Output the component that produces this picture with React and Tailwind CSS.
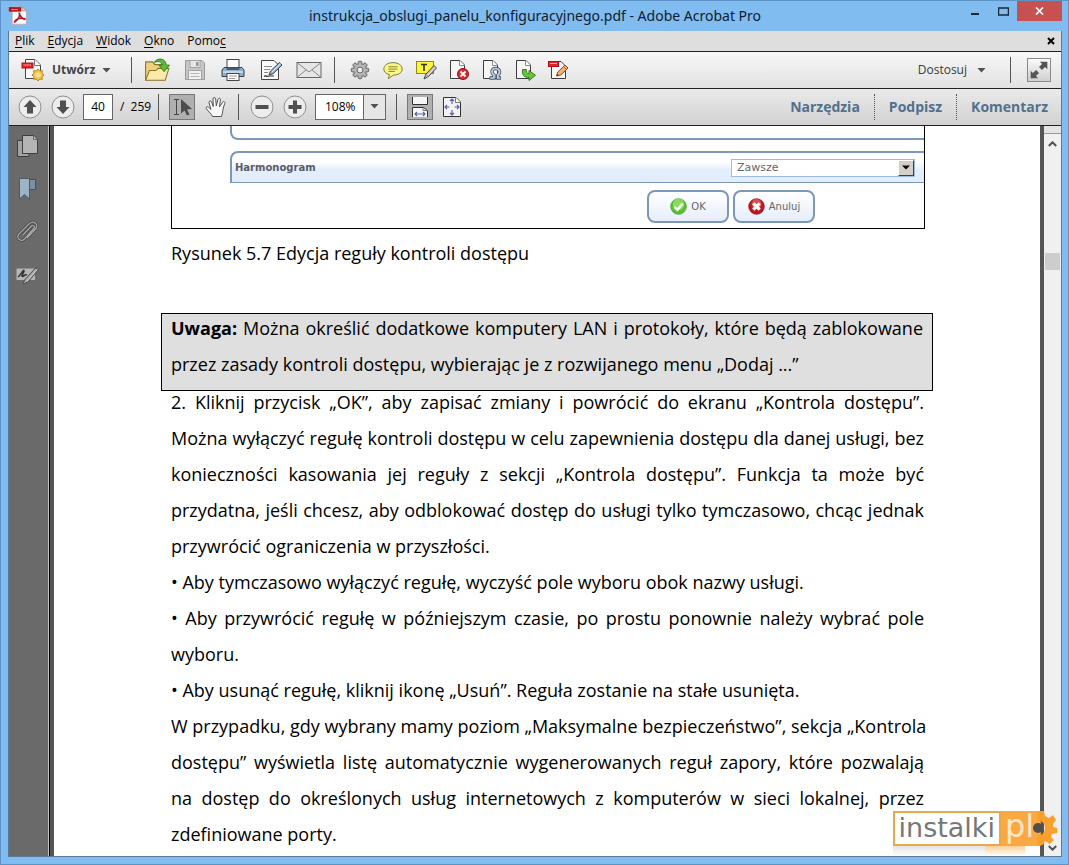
import clsx from 'clsx';

const menus = [
    { before: '', key: 'P', after: 'lik' },
    { before: '', key: 'E', after: 'dycja' },
    { before: '', key: 'W', after: 'idok' },
    { before: '', key: 'O', after: 'kno' },
    { before: 'Pomo', key: 'c', after: '' },
];

// every paragraph is a list of lines, the last one stays ragged
const paragraphs = [
    [
        '2. Kliknij przycisk „OK”, aby zapisać zmiany i powrócić do ekranu „Kontrola dostępu”.',
        'Można wyłączyć regułę kontroli dostępu w celu zapewnienia dostępu dla danej usługi, bez',
        'konieczności kasowania jej reguły z sekcji „Kontrola dostępu”. Funkcja ta może być',
        'przydatna, jeśli chcesz, aby odblokować dostęp do usługi tylko tymczasowo, chcąc jednak',
        'przywrócić ograniczenia w przyszłości.',
    ],
    ['• Aby tymczasowo wyłączyć regułę, wyczyść pole wyboru obok nazwy usługi.'],
    ['• Aby przywrócić regułę w późniejszym czasie, po prostu ponownie należy wybrać pole', 'wyboru.'],
    ['• Aby usunąć regułę, kliknij ikonę „Usuń”. Reguła zostanie na stałe usunięta.'],
    [
        'W przypadku, gdy wybrany mamy poziom „Maksymalne bezpieczeństwo”, sekcja „Kontrola',
        'dostępu” wyświetla listę automatycznie wygenerowanych reguł zapory, które pozwalają',
        'na dostęp do określonych usług internetowych z komputerów w sieci lokalnej, przez',
        'zdefiniowane porty.',
    ],
];

function Icon({ size = 24, className, children }) {
    return (
        <svg width={size} height={size} viewBox="0 0 24 24" fill="none" className={clsx('shrink-0', className)} aria-hidden="true">
            {children}
        </svg>
    );
}

function Caret() {
    return (
        <svg width="9" height="5" viewBox="0 0 9 5" className="shrink-0 pointer-events-none" aria-hidden="true">
            <path d="M0.5 0H8.5L4.5 4.6Z" fill="#505050" />
        </svg>
    );
}

function Separator() {
    return <div className="w-px h-[26px] shrink-0 bg-[#555]" />;
}

function ToolButton({ label, wide, children }) {
    return (
        <button aria-label={label} className={clsx('h-7 shrink-0 flex items-center justify-center', wide ? 'w-[38px]' : 'w-[33px]')}>
            {children}
        </button>
    );
}

// sheet with a folded corner, shared by the document icons
function Sheet() {
    return (
        <>
            <path d="M3.5 2.5H13L17.5 7V20.5H3.5Z" fill="#f6f6f6" stroke="#3c3c3c" />
            <path d="M12.5 2.5V7.5H17.5" fill="#fff" stroke="#8a8a8a" />
        </>
    );
}

function AcrobatIcon() {
    return (
        <Icon size={20}>
            <path d="M5 2H17L22 7V23H5Z" fill="#fff" stroke="#b9a3a3" />
            <path d="M17 2V7H22Z" fill="#e4d8d8" stroke="#a88" />
            <path d="M1 2.500H16V8H1Z" fill="#b3131b" />
            <path d="M4 5.500H12" stroke="#e89a9d" strokeWidth="1.200" />
            <path d="M13 9C14.500 13 16 17 21 17.500M14 10C14 15 11 19 7 21M8 19C11 16 16 15.500 21 16.500" stroke="#b3131b" strokeWidth="1.800" />
        </Icon>
    );
}

function CreateIcon() {
    return (
        <Icon size={24}>
            <path d="M4.500 1.500H14L19.500 7V20.500H4.500Z" fill="#fafafa" stroke="#444" />
            <path d="M13.500 1.500V7.500H19.500" fill="#fff" stroke="#777" />
            <rect x="1" y="5" width="11" height="5" fill="#e0252c" stroke="#a8141b" />
            <path d="M2.500 7H10" stroke="#f59ca0" />
            <path d="M17 11L18.700 13L21.300 12.700L21 15.300L23 17L21 18.700L21.300 21.300L18.700 21L17 23L15.300 21L12.700 21.300L13 18.700L11 17L13 15.300L12.700 12.700L15.300 13Z" fill="#f5c64c" stroke="#b98420" />
            <circle cx="17" cy="17" r="2.500" fill="#fbe08e" />
        </Icon>
    );
}

function OpenIcon() {
    return (
        <Icon size={26}>
            <path d="M1.500 21V4.500H8L10 7H19.500V21Z" fill="#efd37a" stroke="#8b7430" />
            <path d="M1.500 21.500L5 12.500H11L13 10.500H23L19.500 21.500Z" fill="#fbeaa8" stroke="#8b7430" />
            <path d="M9.500 5C12 0.500 20 0.500 20.500 7.500H23.500L18.500 13.500L13.800 7.500H16.800C16.500 4.200 13 3.500 9.500 5Z" fill="#5bbd35" stroke="#2f7f1b" strokeWidth="0.900" />
        </Icon>
    );
}

function SaveIcon() {
    return (
        <Icon size={24}>
            <path d="M2.500 2.500H19L21.500 5V21.500H2.500Z" fill="#c6c6c6" stroke="#999" />
            <rect x="7" y="2.500" width="10" height="7" fill="#e6e6e6" stroke="#a4a4a4" />
            <rect x="13" y="4" width="2.500" height="4" fill="#999" />
            <rect x="5.500" y="12.500" width="13" height="9" fill="#f1f1f1" stroke="#a4a4a4" />
            <path d="M7.500 15.500H16.500M7.500 18.500H16.500" stroke="#b5b5b5" />
        </Icon>
    );
}

function PrintIcon() {
    return (
        <Icon size={24}>
            <rect x="6" y="1.500" width="12" height="10" fill="#fdfdfd" stroke="#444" />
            <path d="M3 9.500H21L23 12V18.500H1V12Z" fill="#8fb0c8" stroke="#33414d" />
            <path d="M5.500 9.500H18.500V12H5.500Z" fill="#4a5a68" />
            <path d="M2 14H22" stroke="#d6e6f2" strokeWidth="1.500" />
            <rect x="6" y="15.500" width="12" height="7" fill="#fff" stroke="#444" />
            <path d="M8 18H16M8 20.500H14" stroke="#9a9a9a" />
        </Icon>
    );
}

function EditIcon() {
    return (
        <Icon size={24}>
            <path d="M2.500 2.500H15L19.500 7V21.500H2.500Z" fill="#fafafa" stroke="#444" />
            <path d="M5 8.500H13M5 11.500H11M5 14.500H9" stroke="#8c8c8c" />
            <path d="M5 18.500C7 16.500 7.500 19.500 9.500 18H15" stroke="#333" strokeWidth="1.200" />
            <path d="M10 17L11.500 13L20.500 4.500L23 7L14 15.800Z" fill="#9db6c9" stroke="#38444e" />
            <path d="M13 14L21.500 5.800" stroke="#e5eef5" />
        </Icon>
    );
}

function MailIcon() {
    return (
        <svg width="26" height="18" viewBox="0 0 26 18" fill="none" aria-hidden="true">
            <rect x="1" y="1.500" width="24" height="15" fill="#e6e6e6" stroke="#666" />
            <path d="M1.500 2L13 11L24.500 2M1.500 16L10 9M24.500 16L16 9" stroke="#858585" />
        </svg>
    );
}

function GearIcon() {
    return (
        <Icon size={22}>
            {[0, 45, 90, 135].map((a) => (
                <rect key={a} x="10" y="2.500" width="4" height="19" rx="1" fill="#aaa" stroke="#5d5d5d" transform={`rotate(${a} 12 12)`} />
            ))}
            <circle cx="12" cy="12" r="7" fill="#b5b5b5" stroke="#5d5d5d" />
            {[0, 45, 90, 135].map((a) => (
                <rect key={a} x="10.600" y="4" width="2.800" height="16" fill="#b5b5b5" transform={`rotate(${a} 12 12)`} />
            ))}
            <circle cx="12" cy="12" r="3.200" fill="#eee" stroke="#5d5d5d" />
        </Icon>
    );
}

function CommentIcon() {
    return (
        <Icon size={22}>
            <path d="M12 4C18 4 22 7 22 11C22 15 18 17.500 12.500 17.500L7 21.500L8 17C4.500 16 2 14 2 11C2 7 6 4 12 4Z" fill="#fbf783" stroke="#75722c" />
            <path d="M7 8.500H17M7 11H17M7 13.500H14" stroke="#7d7a35" />
        </Icon>
    );
}

function HighlightIcon() {
    return (
        <Icon size={24}>
            <rect x="2.500" y="3.500" width="17" height="12" fill="#fbf53a" stroke="#8d8a22" />
            <path d="M7 6.500H13M10 6.500V13" stroke="#333" strokeWidth="1.600" />
            <path d="M10 21L12 16L20 7.500L22.500 10L14.500 18.500Z" fill="#b9b9b9" stroke="#4a4a4a" />
            <path d="M14 17L21 9.500" stroke="#f1f1f1" />
        </Icon>
    );
}

function DeletePageIcon() {
    return (
        <Icon>
            <Sheet />
            <circle cx="16" cy="16" r="5.500" fill="#da2b2b" stroke="#8d1414" />
            <path d="M13.500 13.500L18.500 18.500M18.500 13.500L13.500 18.500" stroke="#fff" strokeWidth="1.800" />
        </Icon>
    );
}

function RotatePageIcon() {
    return (
        <Icon>
            <Sheet />
            <path d="M9.500 20H14V17C10.500 14.500 12 10.500 15.500 10.500C19.500 10.500 20.800 14.500 17.800 17V20H21" stroke="#44586b" strokeWidth="3.400" />
            <path d="M10.300 20H14V17C10.500 14.500 12 10.500 15.500 10.500C19.500 10.500 20.800 14.500 17.800 17V20H20.200" stroke="#c4d3df" strokeWidth="1.700" />
        </Icon>
    );
}

function ExportPageIcon() {
    return (
        <Icon>
            <Sheet />
            <path d="M9.500 11.500V14C9.500 18 12 19.500 16 19.500V22.500L22.500 17.300L16 12.500V15.500C13.500 15.500 13.300 14 13.300 11.500Z" fill="#6cc23c" stroke="#2f7c1a" />
        </Icon>
    );
}

function EditPdfIcon() {
    return (
        <Icon>
            <path d="M5.500 3.500H15L19.500 8V20.500H5.500Z" fill="#f8f8f8" stroke="#3c3c3c" />
            <rect x="2.500" y="3.500" width="10" height="5" fill="#e0252c" stroke="#a8141b" />
            <path d="M4 5.500H11" stroke="#f7aaad" />
            <path d="M10.500 18L11.800 14L19 7L22 10L14.800 17Z" fill="#f0b073" stroke="#86501f" />
            <path d="M10.500 18L11.200 16L12.600 17.400Z" fill="#333" />
            <path d="M17.500 8.500L20.500 11.500" stroke="#c4602a" />
        </Icon>
    );
}

function RoundIcon({ children }) {
    return (
        <Icon size={24}>
            <circle cx="12" cy="12" r="11" fill="#ededed" stroke="#8f8f8f" />
            {children}
        </Icon>
    );
}

function HandIcon() {
    return (
        <Icon size={24}>
            <path
                d="M8.500 21.500C7.500 18.500 3 15.500 2.200 13.300C1.800 11.800 3.600 11.200 4.700 12.300L7 14.500L5 7.500C4.700 5.600 6.900 5.200 7.500 6.800L9.300 11.500L9 4C9 2 11.400 2 11.700 3.900L12.300 11L14 4.300C14.500 2.500 16.700 2.900 16.400 4.900L15.500 11.800L18.500 7.300C19.600 5.900 21.400 6.900 20.700 8.600C19 12.500 18.700 18 17.500 21.500Z"
                fill="#f8f8f8"
                stroke="#555"
            />
        </Icon>
    );
}

function TitleBar() {
    return (
        <header className="h-[30px] shrink-0 flex items-start justify-between">
            <div className="flex-1 pt-1"><AcrobatIcon /></div>
            <h1 className="pt-[5px] text-[14px] leading-[20px] text-[#10202e] font-['Noto_Sans',sans-serif]">instrukcja_obslugi_panelu_konfiguracyjnego.pdf - Adobe Acrobat Pro</h1>
            <div className="flex-1 flex justify-end">
                <button aria-label="Minimalizuj" className="w-7 h-5 flex items-center justify-center">
                    <svg width="10" height="10" aria-hidden="true"><rect x="1" y="7" width="8" height="2" fill="#1b2a38" /></svg>
                </button>
                <button aria-label="Maksymalizuj" className="w-7 h-5 flex items-center justify-center">
                    <svg width="11" height="9" aria-hidden="true"><path d="M0.500 1H10.500V8H0.500Z" fill="none" stroke="#1b2a38" strokeWidth="1.500" /></svg>
                </button>
                <button aria-label="Zamknij" className="w-[45px] h-[20px] bg-[#c75050] flex items-center justify-center">
                    <svg width="9" height="8" viewBox="0 0 9 8" aria-hidden="true"><path d="M1 0.500L8 7.500M8 0.500L1 7.500" stroke="#fff" strokeWidth="1.700" /></svg>
                </button>
            </div>
        </header>
    );
}

function MenuBar() {
    return (
        <nav className="h-5 shrink-0 flex items-center bg-[#dedede] px-[6px] text-[12px] leading-[18px]">
            <div className="flex gap-[13px]">
                {menus.map(({ before, key, after }) => (
                    <button key={before + key}>{before}<span className="underline underline-offset-2">{key}</span>{after}</button>
                ))}
            </div>
            <button aria-label="Zamknij dokument" className="ml-auto">
                <svg width="8" height="8" viewBox="0 0 8 8" aria-hidden="true"><path d="M1 1L7 7M7 1L1 7" stroke="#000" strokeWidth="2" /></svg>
            </button>
        </nav>
    );
}

function MainToolbar() {
    return (
        <div className="h-[37px] shrink-0 flex items-center bg-linear-to-b from-[#f7f7f7] to-[#e2e2e2] border-t border-[#222] pl-3 pr-[10px]">
            <button className="flex items-center gap-[7px] font-bold text-[12px] text-[#444] mr-5">
                <CreateIcon />
                Utwórz
                <Caret />
            </button>
            <Separator />
            <div className="flex mx-[6px]">
                <ToolButton wide label="Otwórz"><OpenIcon /></ToolButton>
                <ToolButton wide label="Zapisz"><SaveIcon /></ToolButton>
                <ToolButton wide label="Drukuj"><PrintIcon /></ToolButton>
                <ToolButton wide label="Edytuj"><EditIcon /></ToolButton>
                <ToolButton wide label="Wyślij"><MailIcon /></ToolButton>
            </div>
            <Separator />
            <div className="flex ml-2">
                <ToolButton label="Ustawienia"><GearIcon /></ToolButton>
                <ToolButton label="Notatka"><CommentIcon /></ToolButton>
                <ToolButton label="Wyróżnij tekst"><HighlightIcon /></ToolButton>
                <ToolButton label="Usuń strony"><DeletePageIcon /></ToolButton>
                <ToolButton label="Obróć strony"><RotatePageIcon /></ToolButton>
                <ToolButton label="Eksportuj"><ExportPageIcon /></ToolButton>
                <ToolButton label="Edytuj PDF"><EditPdfIcon /></ToolButton>
            </div>
            <button className="ml-auto mr-6 flex items-center gap-[10px] text-[12px] text-[#3a3a3a]">
                Dostosuj
                <Caret />
            </button>
            <Separator />
            <button aria-label="Tryb czytania" className="ml-4 w-6 h-6 shrink-0 flex items-center justify-center border border-[#8a8a8a] bg-linear-to-b from-[#fafafa] to-[#cfcfcf]">
                <Icon size={20}>
                    <path d="M13 2H22V11L19.300 8.300L15.500 12L12 8.500L15.700 4.700Z" fill="#555" />
                    <path d="M11 22H2V13L4.700 15.700L8.500 12L12 15.500L8.300 19.300Z" fill="#555" />
                </Icon>
            </button>
        </div>
    );
}

function PageToolbar() {
    return (
        <div className="h-[37px] shrink-0 flex items-center bg-linear-to-b from-[#eaeaea] to-[#d2d2d2] border-t border-[#222] pl-1 pr-[13px] pb-px text-[12px]">
            <ToolButton label="Poprzednia strona"><RoundIcon><path d="M12 5L18.500 12H15V18.500H9V12H5.500Z" fill="#505050" /></RoundIcon></ToolButton>
            <ToolButton label="Następna strona"><RoundIcon><path d="M12 19L18.500 12H15V5.500H9V12H5.500Z" fill="#505050" /></RoundIcon></ToolButton>
            <label className="ml-1 flex items-center">
                <input aria-label="Numer strony" defaultValue="40" className="w-[30px] h-[26px] bg-white border border-[#666] text-center" />
                <span className="w-[45px] text-center">/&nbsp; 259</span>
            </label>
            <Separator />
            <button aria-label="Zaznaczanie" className="ml-[10px] mr-1 w-[26px] h-[26px] shrink-0 flex items-center justify-center border border-[#777] bg-[#b0b0b0]">
                <Icon>
                    <path d="M4 4.500H9M6.500 4.500V19.500M4 19.500H9" stroke="#444" />
                    <path d="M11 4L22 14L17 14.500L19.500 19.500L17 20.500L14.500 15.500L11 18.500Z" fill="#4c4c4c" />
                </Icon>
            </button>
            <ToolButton label="Rączka"><HandIcon /></ToolButton>
            <div className="ml-[6px]"><Separator /></div>
            <div className="flex ml-[6px] mr-1">
                <ToolButton label="Pomniejsz"><RoundIcon><path d="M5.500 10H18.500V14H5.500Z" fill="#505050" /></RoundIcon></ToolButton>
                <ToolButton label="Powiększ"><RoundIcon><path d="M10 5.500H14V10H18.500V14H14V18.500H10V14H5.500V10H10Z" fill="#505050" /></RoundIcon></ToolButton>
            </div>
            <div className="relative w-[71px] h-[26px] shrink-0 border border-[#666] flex">
                <select aria-label="Powiększenie" className="w-full appearance-none bg-white pl-[9px]">
                    <option>108%</option>
                </select>
                <span className="absolute right-0 inset-y-0 w-[22px] flex items-center justify-center border-l border-[#666] bg-[#e6e6e6] pointer-events-none"><Caret /></span>
            </div>
            <div className="mx-[10px]"><Separator /></div>
            <button aria-label="Dopasuj szerokość" className="w-[26px] h-[26px] shrink-0 flex items-center justify-center border border-[#777] bg-[#b0b0b0]">
                <Icon>
                    <path d="M4.500 2V9.500H19.500V2" fill="#f6f6f6" stroke="#333" />
                    <path d="M4.500 22V12.500H15.500L19.500 15.500V22" fill="#f6f6f6" stroke="#333" />
                    <path d="M15 12.500V15.500H19.500" stroke="#777" />
                    <path d="M7 19H17M9 17L7 19L9 21M15 17L17 19L15 21" stroke="#5a62ae" strokeWidth="1.200" />
                </Icon>
            </button>
            <ToolButton label="Dopasuj stronę">
                <Icon className="ml-1">
                    <path d="M3.500 2.500H16L20.500 7V21.500H3.500Z" fill="#f3f3f3" stroke="#333" />
                    <path d="M15.500 2.500V7.500H20.500" fill="#fff" stroke="#777" />
                    <path d="M12 4V9M12 15V20M5 12H9.500M14.500 12H19M10 6L12 4L14 6M10 18L12 20L14 18M7 10L5 12L7 14M17 10L19 12L17 14" stroke="#5a62ae" strokeWidth="1.200" />
                </Icon>
            </ToolButton>
            <div className="ml-auto flex items-center font-bold text-[14px] text-[#52708e]">
                <button className="px-[14px] h-[26px]">Narzędzia</button>
                <button className="px-[14px] h-[26px] border-x border-dotted border-[#555]">Podpisz</button>
                <button className="pl-[14px] h-[26px]">Komentarz</button>
            </div>
        </div>
    );
}

function SidePanel() {
    return (
        <aside className="w-10 shrink-0 bg-[#6a6a6a] border-r border-[#c4c4c4] flex flex-col items-center gap-[19px] pt-2 pr-[3px]">
            <button aria-label="Miniatury stron">
                <Icon>
                    <path d="M2.500 6.500H14V22.500H2.500Z" fill="#a3a3a3" stroke="#3f3f3f" />
                    <path d="M7.500 1.500H19L22.500 5V19.500H7.500Z" fill="#b4b4b4" stroke="#3f3f3f" />
                    <path d="M18.500 1.500V5.500H22.500" stroke="#6a6a6a" />
                </Icon>
            </button>
            <button aria-label="Zakładki">
                <Icon>
                    <path d="M12.500 2.500H20.500V12.500H14Z" fill="#7891a4" stroke="#42525e" />
                    <path d="M4.500 1.500H14.500V22L9.500 17.500L4.500 22Z" fill="#9db4c5" stroke="#4b5a66" />
                </Icon>
            </button>
            <button aria-label="Załączniki">
                <Icon>
                    <path d="M8 15L16.500 6C18 4.500 20.500 6.500 19 8.300L9.500 19C6 22.500 0.500 18 4 14L14.500 3.500C18.500 0 24 4.500 20.500 9L12 18" stroke="#404040" strokeWidth="2.600" />
                    <path d="M8 15L16.500 6C18 4.500 20.500 6.500 19 8.300L9.500 19C6 22.500 0.500 18 4 14L14.500 3.500C18.500 0 24 4.500 20.500 9L12 18" stroke="#a9a9a9" strokeWidth="1.300" />
                </Icon>
            </button>
            <button aria-label="Podpisy">
                <Icon>
                    <path d="M1.500 5.500H20V17H1.500Z" fill="#b5b5b5" />
                    <path d="M3 14C6 12 8 6.500 9 7.500C10 8.500 5.500 13.500 7.500 13.500C9 13.500 10 10.500 12 12" stroke="#303030" strokeWidth="1.500" />
                    <path d="M8 21L9.500 17L20.500 5L23.500 6.500L13 19Z" fill="#a0a8a4" stroke="#4c4c4c" />
                    <path d="M12 18L22 6.500" stroke="#d0d0d0" />
                </Icon>
            </button>
        </aside>
    );
}

function RuleForm() {
    return (
        <div className="h-[103px] border-x border-b border-black pl-[58px] font-['DejaVu_Sans',sans-serif] text-[#666]">
            <div className="h-[14px] rounded-bl-lg border-l-2 border-b-2 border-[#7d97b8]" />
            <div className="mt-[11px] h-8 rounded-tl-lg border-l-2 border-t-2 border-b border-[#7d97b8] bg-linear-to-b from-white from-30% to-[#e3edfc] to-60% flex items-center justify-between pl-[3px] pr-[9px]">
                <label htmlFor="schedule" className="font-bold text-[10px] leading-[12px] text-[#5c5c66]">Harmonogram</label>
                <div className="relative w-[184px] h-[18px] border border-[#9dbbdb] flex">
                    <select id="schedule" className="w-full appearance-none bg-white pl-[5px] text-[11px] leading-[16px]">
                        <option>Zawsze</option>
                    </select>
                    <span className="absolute right-0 inset-y-0 w-4 flex items-center justify-center bg-[#d4d0c8] border border-t-white border-l-white border-r-[#404040] border-b-[#404040] pointer-events-none">
                        <svg width="8" height="5" viewBox="0 0 8 5" aria-hidden="true"><path d="M0 0.500H8L4 4.500Z" fill="#000" /></svg>
                    </span>
                </div>
            </div>
            <div className="mt-[7px] flex justify-end gap-1 pr-[109px] text-[10px]">
                <button className="w-[82px] h-[33px] rounded-lg border-2 border-[#7d97b8] bg-linear-to-b from-white to-[#e6eefb] flex items-center justify-center gap-1">
                    <Icon size={17}>
                        <circle cx="12" cy="12" r="11" fill="#57c22f" stroke="#3a9a1d" />
                        <circle cx="12" cy="9" r="8" fill="#86dd5c" />
                        <path d="M6 12.500L10.500 16.500L18 8" stroke="#fff" strokeWidth="3.500" />
                    </Icon>
                    OK
                </button>
                <button className="w-[82px] h-[33px] rounded-lg border-2 border-[#7d97b8] bg-linear-to-b from-white to-[#e6eefb] flex items-center justify-center gap-1">
                    <Icon size={17}>
                        <circle cx="12" cy="12" r="11" fill="#c4161f" stroke="#8f0e15" />
                        <circle cx="12" cy="8.500" r="7" fill="#dd4a50" />
                        <path d="M7.500 7.500L16.500 16.500M16.500 7.500L7.500 16.500" stroke="#fff" strokeWidth="4.500" />
                    </Icon>
                    Anuluj
                </button>
            </div>
        </div>
    );
}

function Lines({ lines, start }) {
    return lines.map((line, i) => (
        <span key={line} className={clsx('block text-justify', i < lines.length - 1 && '[text-align-last:justify]')}>
            {i === 0 && start}{line}
        </span>
    ));
}

function DocumentPage() {
    return (
        <main className="flex-1 min-w-0 overflow-hidden bg-white border-x-4 border-[#555] pl-[117px] pr-[115px] text-[18px] leading-[36px]">
            <RuleForm />
            <p className="mt-[6px]">Rysunek 5.7 Edycja reguły kontroli dostępu</p>
            <div className="-ml-[10px] -mr-2 mt-[42px] h-[78px] bg-[#dfdfdf] border border-black px-[9px]">
                <p className="-mt-1">
                    <Lines
                        start={<b>Uwaga: </b>}
                        lines={[
                            'Można określić dodatkowe komputery LAN i protokoły, które będą zablokowane',
                            'przez zasady kontroli dostępu, wybierając je z rozwijanego menu „Dodaj ...”',
                        ]}
                    />
                </p>
            </div>
            <div className="-mt-[7px] pr-px">
                {paragraphs.map((lines) => (
                    <p key={lines[0]}><Lines lines={lines} /></p>
                ))}
            </div>
        </main>
    );
}

function ScrollBar() {
    return (
        <div className="w-[17px] shrink-0 bg-[#f0f0f0] flex flex-col items-center">
            <div className="h-2 w-full bg-[#e4e4e4] border-b border-[#999]" />
            <svg width="9" height="6" viewBox="0 0 9 6" className="mt-[7px]" aria-hidden="true"><path d="M0.800 5L4.500 1.300L8.200 5" fill="none" stroke="#505050" strokeWidth="2" /></svg>
            <div className="mt-[106px] w-[15px] h-[17px] bg-[#cdcdcd]" />
            <svg width="9" height="6" viewBox="0 0 9 6" className="mt-auto mb-[5px]" aria-hidden="true"><path d="M0.800 1L4.500 4.700L8.200 1" fill="none" stroke="#505050" strokeWidth="2" /></svg>
        </div>
    );
}

function Watermark() {
    return (
        <div className="absolute right-[11px] bottom-2 font-['DejaVu_Sans',sans-serif] leading-[30px]">
            <div className="flex items-center">
                <span className="h-[35px] px-1 bg-white border-2 border-[#eaa84d] text-[27px] text-[#777]">instalki</span>
                <span className="h-[35px] w-10 pl-1 bg-[#f9a02d]/90 text-[32px] text-[#fbe6c8]">pl</span>
                <svg width="32" height="36" viewBox="0 0 32 36" className="-ml-4" aria-hidden="true">
                    <path
                        d="M12 1H19L20 6L24 8L28 5L31 10L28 14V17L32 18V23L27 24L26 27L29 30L25 34L20 31L18 35H12V26A8 8 0 0 0 12 10Z"
                        fill="#f9a02d"
                    />
                    <circle cx="13" cy="18" r="5" fill="#4f4f4f" />
                </svg>
            </div>
            <div className="h-[10px] mr-8 flex">
                <div className="flex-1 bg-linear-to-b from-[#777]/20 to-transparent" />
                <div className="w-10 bg-linear-to-b from-[#f9a02d]/50 to-transparent" />
            </div>
        </div>
    );
}

export default function App() {
    return (
        <div className="relative h-screen flex flex-col bg-[#81bcf1] border border-[#5d93c6] pl-[7px] pr-[6px] pb-[7px] font-['Open_Sans',sans-serif] text-black whitespace-nowrap">
            <TitleBar />
            <div className="flex-1 min-h-0 flex flex-col border border-t-0 border-[#5b7a99]">
                <MenuBar />
                <MainToolbar />
                <PageToolbar />
                <div className="flex-1 min-h-0 flex border-t border-[#222]">
                    <SidePanel />
                    <div className="w-px shrink-0 bg-black" />
                    <DocumentPage />
                    <ScrollBar />
                </div>
            </div>
            <Watermark />
        </div>
    );
}
